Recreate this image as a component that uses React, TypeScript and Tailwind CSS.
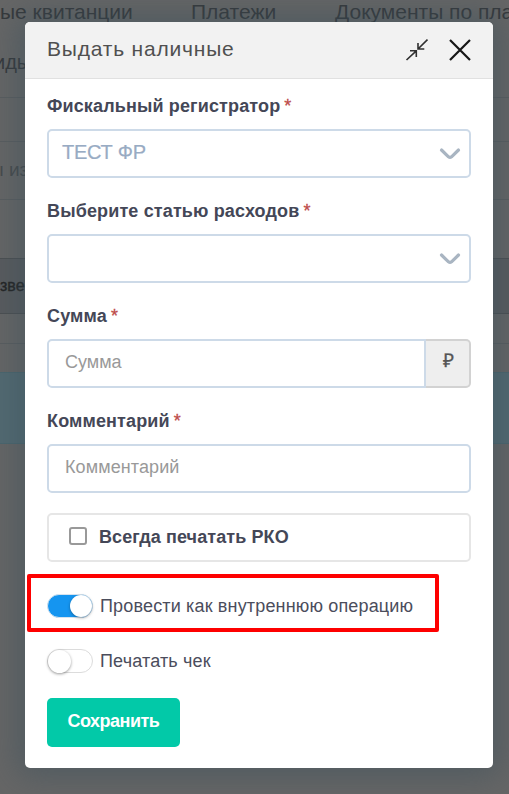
import type { ReactNode } from "react";

const tabs = [
  { title: "ые квитанции", className: "w-[191px]" },
  { title: "Платежи", className: "w-[144px]" },
  { title: "Документы по пла", className: "" },
];

function Backdrop() {
  return (
    <div className="h-full overflow-hidden whitespace-nowrap bg-[#666] text-[#35383b]">
      <div className="flex h-[24px] items-center text-[21px]">
        {tabs.map((tab) => (
          <span key={tab.title} className={`shrink-0 ${tab.className}`}>
            {tab.title}
          </span>
        ))}
      </div>
      <div className="flex h-[74px] items-center border-b border-[#5a5d5f] pt-[3px] text-[20px]">
        <span className="-ml-[6px]">иды</span>
      </div>
      <div className="h-[44px] border-b border-[#5a5d5f]" />
      <div className="flex h-[58px] items-center border-b border-[#5a5d5f] text-[19px] text-[#474a4c]">
        <span className="-ml-[10px]">ы из</span>
      </div>
      <div className="h-[58px]" />
      <div className="flex h-[56px] items-center border-y border-[#4c4f51] bg-[#595b5e] text-[16px] text-[#222] [-webkit-text-stroke:0.4px_#222]">
        зве
      </div>
      <div className="h-[30px] border-b border-[#5a5d5f]" />
      <div className="h-[28px]" />
      <div className="h-[72px] border-y border-[#4b666e] bg-[#536a72]" />
    </div>
  );
}

function Field({ label, children }: { label: string; children: ReactNode }) {
  return (
    <div className="h-[105px]">
      <div className="flex h-[30px] items-center gap-[4px] text-[18px] text-[#444757]">
        <span className="font-bold tracking-[0.14px]">{label}</span>
        <span className="text-[#bd4a48] [-webkit-text-stroke:0.3px_#bd4a48]">
          *
        </span>
      </div>
      <div className="mt-[8px]">{children}</div>
    </div>
  );
}

function Select({ value }: { value?: string }) {
  return (
    <div className="flex h-[49px] items-center justify-between rounded-[5px] border-2 border-[#cddae8] pr-[8px] pl-[13px] text-[20px] tracking-[-0.25px] text-[#98abc3] [-webkit-text-stroke:0.2px_#98abc3]">
      <span className="pb-[3px]">{value}</span>
      <svg
        width="22"
        height="14"
        viewBox="0 0 22 14"
        fill="none"
        stroke="#a9b5c2"
        strokeWidth="3.2"
        strokeLinecap="round"
        strokeLinejoin="round"
      >
        <path d="M2.5 3 L9.5 9.8 Q11 11 12.5 9.8 L19.5 3" />
      </svg>
    </div>
  );
}

function Toggle({ on, label }: { on?: boolean; label: string }) {
  return (
    <div className="flex h-[24px] items-center gap-[7px] text-[18px] tracking-[0.16px] text-[#4b4d5c]">
      <span
        className={
          on
            ? "flex h-[24px] w-[46px] items-center justify-end rounded-full border border-[#d5e3ef] bg-[#1595f0]"
            : "flex h-[24px] w-[46px] items-center rounded-full border border-[#dcdcdc] bg-white"
        }
      >
        <span
          className={
            on
              ? "size-[22px] rounded-full bg-white shadow-[0_1px_3px_rgba(0,0,0,0.35)]"
              : "size-[23px] shrink-0 rounded-full bg-white shadow-[0_1px_3px_rgba(0,0,0,0.4)]"
          }
        />
      </span>
      <span>{label}</span>
    </div>
  );
}

function Header() {
  return (
    <div className="flex h-[57px] items-center justify-between rounded-t-[5px] border-b border-[#e1e1e1] bg-[#f2f2f2] pr-[22px] pl-[22px]">
      <h2 className="pb-[3px] text-[21px] tracking-[0.8px] text-[#505050]">
        Выдать наличные
      </h2>
      <div className="flex items-center gap-[21px]">
        <svg
          width="24"
          height="24"
          viewBox="0 0 24 24"
          fill="none"
          stroke="#303030"
          strokeWidth="1.6"
        >
          <path d="M2.5 22 L12.3 12.8 M6 12.8 H12.3 V19" />
          <path d="M23.5 1.5 L14 11 M14 5 V11 H20.3" />
        </svg>
        <svg
          width="22"
          height="22"
          viewBox="0 0 22 22"
          fill="none"
          stroke="#151515"
          strokeWidth="2.2"
        >
          <path d="M1 1 L21 21 M21 1 L1 21" />
        </svg>
      </div>
    </div>
  );
}

export default function App() {
  return (
    <div className="relative h-[794px] w-[509px] overflow-hidden font-['Liberation_Sans',Arial,sans-serif]">
      <Backdrop />
      <div className="absolute top-[22px] left-[25px] h-[746px] w-[468px] rounded-[5px] bg-white shadow-[0_0_32px_8px_rgba(58,80,92,0.5)]">
        <Header />
        <div className="px-[22px] pt-[12px]">
          <Field label="Фискальный регистратор">
            <Select value="ТЕСТ ФР" />
          </Field>
          <Field label="Выберите статью расходов">
            <Select />
          </Field>
          <Field label="Сумма">
            <div className="flex h-[49px]">
              <input
                className="w-[379px] rounded-l-[5px] border-2 border-[#cddae8] px-[16px] pb-[3px] text-[18px] placeholder:text-[#999]"
                placeholder="Сумма"
              />
              <span className="flex flex-1 items-center justify-center rounded-r-[5px] border-2 border-l-0 border-[#d2d2d2] bg-[#eee] pb-[4px] pl-[2px] text-[19px] text-[#555] [-webkit-text-stroke:0.3px_#555]">
                ₽
              </span>
            </div>
          </Field>
          <Field label="Комментарий">
            <input
              className="h-[49px] w-full rounded-[5px] border-2 border-[#cddae8] px-[16px] pb-[3px] text-[18px] tracking-[0.1px] placeholder:text-[#999]"
              placeholder="Комментарий"
            />
          </Field>
          <label className="mt-[2px] flex h-[49px] items-center gap-[12px] rounded-[5px] border-2 border-[#e6e6e6] pl-[20px] text-[18px] font-bold tracking-[0.1px] text-[#444757]">
            <input
              type="checkbox"
              className="mb-[3px] size-[18px] appearance-none rounded-[3px] border-2 border-[#999]"
            />
            Всегда печатать РКО
          </label>
          <div className="mt-[12px] -ml-[20px] h-[58px] w-[412px] rounded-[2px] border-4 border-[#fe0000] pt-[16px] pl-[16px]">
            <Toggle on label="Провести как внутреннюю операцию" />
          </div>
          <div className="mt-[17px]">
            <Toggle label="Печатать чек" />
          </div>
          <button className="mt-[25px] h-[49px] w-[133px] rounded-[5px] bg-[#02c9a8] pb-[2px] text-[18px] font-bold tracking-[-0.5px] text-white">
            Сохранить
          </button>
        </div>
      </div>
    </div>
  );
}
